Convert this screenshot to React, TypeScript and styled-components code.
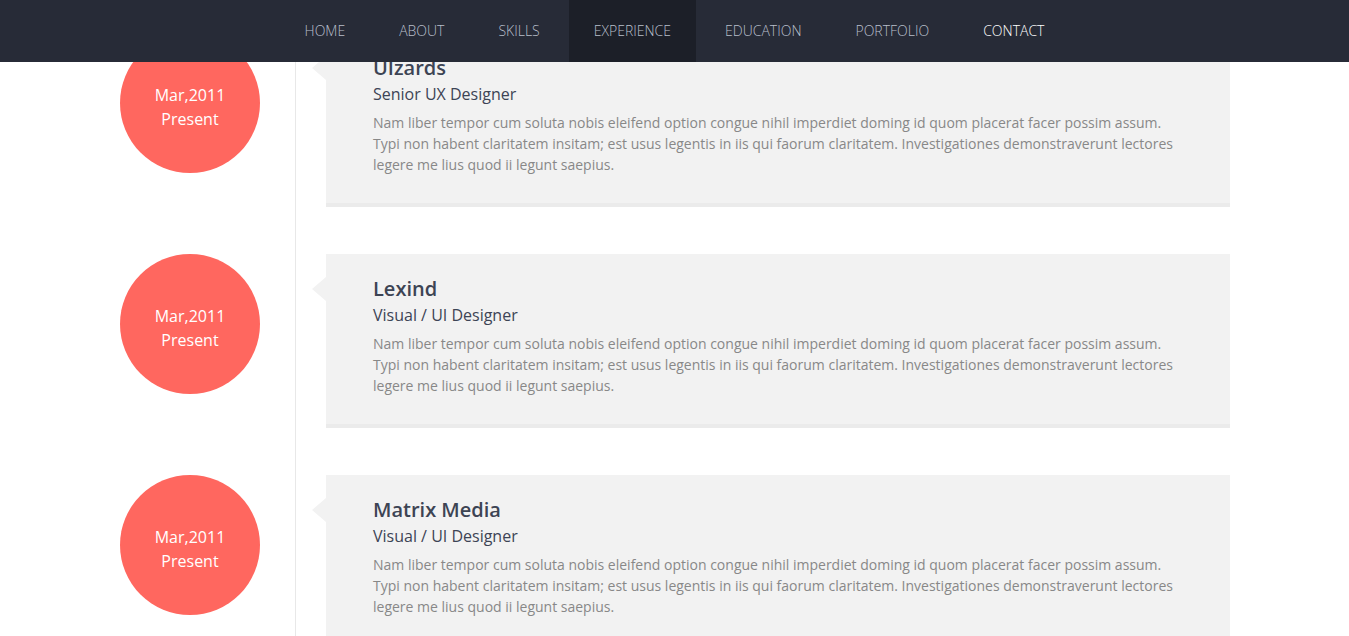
import styled, { createGlobalStyle } from 'styled-components';

type Job = {
  company: string;
  role: string;
  from: string;
  to: string;
  text: string;
};

const LOREM =
  'Nam liber tempor cum soluta nobis eleifend option congue nihil imperdiet doming id quom placerat facer possim assum. Typi non habent claritatem insitam; est usus legentis in iis qui faorum claritatem. Investigationes demonstraverunt lectores legere me lius quod ii legunt saepius.';

const jobs: Job[] = [
  { company: 'UIzards', role: 'Senior UX Designer', from: 'Mar,2011', to: 'Present', text: LOREM },
  { company: 'Lexind', role: 'Visual / UI Designer', from: 'Mar,2011', to: 'Present', text: LOREM },
  { company: 'Matrix Media', role: 'Visual / UI Designer', from: 'Mar,2011', to: 'Present', text: LOREM },
];

const menu = ['Home', 'About', 'Skills', 'Experience', 'Education', 'Portfolio', 'Contact'];

const App = () => {
  return (
    <>
      <GlobalStyle />
      <NavBar>
        {menu.map((item) => (
          <NavLink key={item} href="#" $active={item === 'Experience'} $bright={item === 'Contact'}>
            {item}
          </NavLink>
        ))}
      </NavBar>
      <Timeline>
        {jobs.map((job) => (
          <Entry key={job.company}>
            <DateCol>
              <DateBadge>
                <span>{job.from}</span>
                <span>{job.to}</span>
              </DateBadge>
            </DateCol>
            <CardCol>
              <Card>
                <Company>{job.company}</Company>
                <Role>{job.role}</Role>
                <Text>{job.text}</Text>
              </Card>
            </CardCol>
          </Entry>
        ))}
      </Timeline>
    </>
  );
};

export default App;

const GlobalStyle = createGlobalStyle`
  html, body {
    margin: 0;
    overflow: hidden;
    background: #fff;
    font-family: "Open Sans", "Noto Sans", sans-serif;
  }
  * {
    box-sizing: border-box;
  }
`;

const NavBar = styled.nav`
  position: fixed;
  top: 0;
  left: 0;
  right: 0;
  height: 62px;
  z-index: 10;
  display: flex;
  justify-content: center;
  gap: 4px;
  background: #272b37;
`;

const NavLink = styled.a<{ $active?: boolean; $bright?: boolean }>`
  display: flex;
  align-items: center;
  padding: 0 25px 2px;
  font-size: 14px;
  font-weight: 300;
  text-transform: uppercase;
  text-decoration: none;
  color: ${(p) => (p.$bright ? '#ffffff' : '#b8bfcb')};
  background: ${(p) => (p.$active ? '#1c1f28' : 'transparent')};
`;

const Timeline = styled.div`
  padding-top: 33px;
`;

const Entry = styled.div`
  display: flex;
`;

const DateCol = styled.div`
  width: 295px;
  flex-shrink: 0;
  padding-left: 120px;
`;

const DateBadge = styled.div`
  width: 140px;
  height: 140px;
  border-radius: 50%;
  background: #ff675f;
  color: #fff;
  font-size: 16px;
  line-height: 24px;
  padding-top: 8px;
  display: flex;
  flex-direction: column;
  align-items: center;
  justify-content: center;
`;

const CardCol = styled.div`
  border-left: 1px solid #e8e8e8;
  padding: 0 0 47px 30px;
`;

const Card = styled.div`
  position: relative;
  width: 904px;
  padding: 21px 47px 28px;
  background: #f2f2f2;
  border-bottom: 4px solid #ebebeb;

  &::before {
    content: '';
    position: absolute;
    left: -14px;
    top: 23px;
    border-top: 12px solid transparent;
    border-bottom: 12px solid transparent;
    border-right: 14px solid #f2f2f2;
  }
`;

const Company = styled.h3`
  margin: 0;
  font-size: 20px;
  line-height: 28px;
  font-weight: 600;
  color: #3d4454;
`;

const Role = styled.div`
  font-size: 16px;
  line-height: 24px;
  color: #3d4455;
`;

const Text = styled.p`
  margin: 6px 0 0;
  font-size: 14px;
  line-height: 21px;
  color: #888;
`;
